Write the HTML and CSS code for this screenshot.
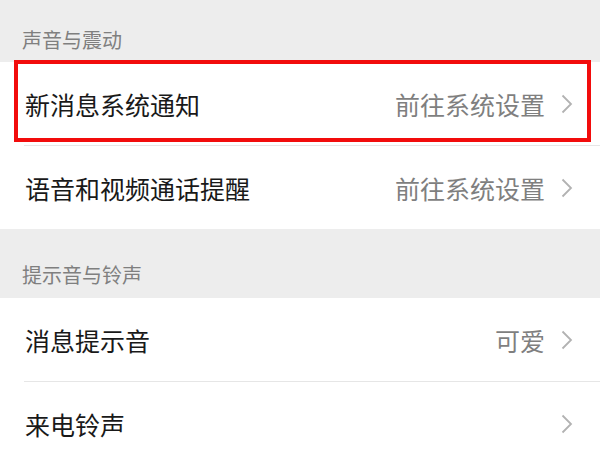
FILE: index.html
```html
<!DOCTYPE html>
<html lang="zh-CN">
<head>
<meta charset="utf-8">
<link rel="stylesheet" href="styles.css">
</head>
<body>
<div class="page">
  <div class="group-title first">声音与震动</div>
  <div class="list">
    <div class="item highlighted">
      <div class="row">
        <span class="label">新消息系统通知</span>
        <span class="value">前往系统设置</span>
        <svg class="chevron" viewBox="0 0 12 20"><path d="M1.5 1.5 L10 10 L1.5 18.5" fill="none" stroke="#b2b2b2" stroke-width="1.8"/></svg>
      </div>
      <div class="highlight-box"></div>
    </div>
    <div class="item">
      <div class="row last">
        <span class="label">语音和视频通话提醒</span>
        <span class="value">前往系统设置</span>
        <svg class="chevron" viewBox="0 0 12 20"><path d="M1.5 1.5 L10 10 L1.5 18.5" fill="none" stroke="#b2b2b2" stroke-width="1.8"/></svg>
      </div>
    </div>
  </div>
  <div class="group-title">提示音与铃声</div>
  <div class="list">
    <div class="item">
      <div class="row">
        <span class="label">消息提示音</span>
        <span class="value">可爱</span>
        <svg class="chevron" viewBox="0 0 12 20"><path d="M1.5 1.5 L10 10 L1.5 18.5" fill="none" stroke="#b2b2b2" stroke-width="1.8"/></svg>
      </div>
    </div>
    <div class="item">
      <div class="row last">
        <span class="label">来电铃声</span>
        <span class="value"></span>
        <svg class="chevron" viewBox="0 0 12 20"><path d="M1.5 1.5 L10 10 L1.5 18.5" fill="none" stroke="#b2b2b2" stroke-width="1.8"/></svg>
      </div>
    </div>
  </div>
</div>
</body>
</html>
```
FILE: styles.css
```css
html, body {
  margin: 0;
  padding: 0;
  background: #ededed;
}
body {
  font-family: "Noto Sans CJK SC", "Noto Sans", sans-serif;
  width: 600px;
  height: 450px;
  overflow: hidden;
}
.page {
  display: flex;
  flex-direction: column;
}
.group-title {
  height: 69px;
  box-sizing: border-box;
  display: flex;
  align-items: flex-end;
  padding: 0 0 9px 22px;
  font-size: 20px;
  line-height: 28px;
  color: #7f7f7f;
  background: #ededed;
}
.group-title.first {
  height: 62px;
  padding-bottom: 8px;
}
.list {
  background: #fff;
}
.item {
  position: relative;
  padding-left: 24px;
}
.row {
  height: 84px;
  box-sizing: border-box;
  display: flex;
  align-items: center;
  padding: 0 27px 0 1px;
  border-bottom: 1px solid #e6e6e6;
}
.row.last {
  border-bottom: none;
  height: 83px;
}
.label {
  flex: 1;
  font-size: 25px;
  line-height: 34px;
  color: #191919;
}
.value {
  font-size: 25px;
  line-height: 34px;
  color: #7f7f7f;
  margin-right: 16px;
}
.chevron {
  width: 12px;
  height: 20px;
  display: block;
}
.highlight-box {
  position: absolute;
  left: 14px;
  right: 9px;
  top: -2px;
  bottom: 4px;
  border: 4px solid #f20c0c;
  pointer-events: none;
}
```
